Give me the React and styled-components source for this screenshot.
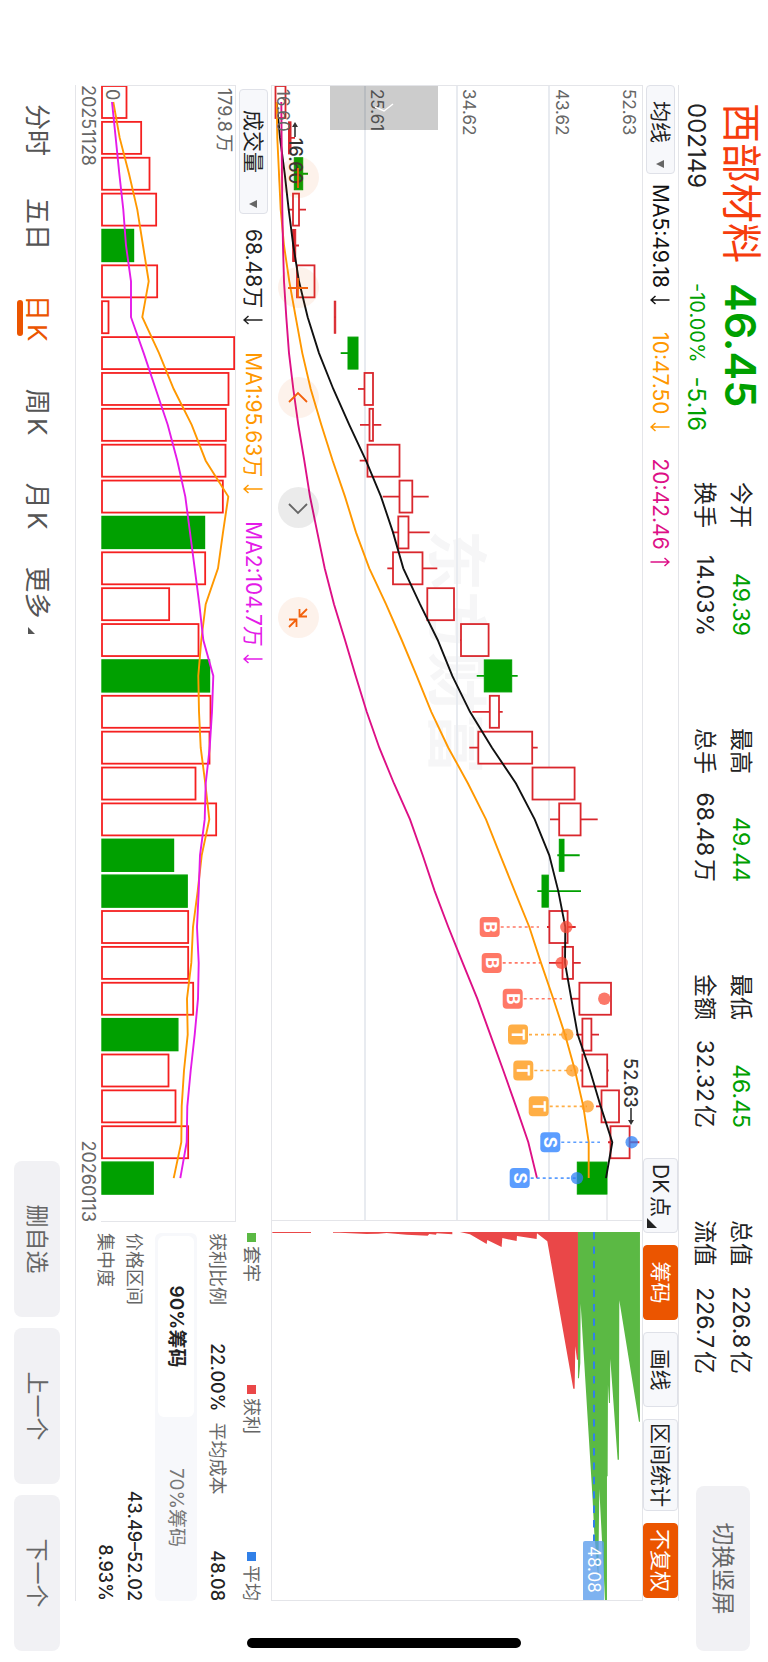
import React, { useState } from 'react';
import styled, { createGlobalStyle } from 'styled-components';

const UP = '#d9272d';
const VOL_UP = '#f52020';
const DOWN = '#00a000';
const ORANGE = '#ff9800';
const PINK = '#dd1086';
const MAGENTA = '#e41be8';

const STEP = 35.87;
const BAR = 32;

// [low, bodyBottom, bodyTop, high, type]
const candles = [
    [275, 275.5, 285.5, 286, 'up'],
    [288, 288.5, 291, 295, 'flat'],
    [294, 294.3, 302.7, 308, 'down'],
    [288, 293, 299, 306, 'up'],
    [293, 292.7, 295.7, 299, 'flat'],
    [297, 297, 314.5, 315, 'up'],
    [335, 334.3, 335.7, 335, 'flat'],
    [340.7, 348, 358, 358, 'down'],
    [358, 364.5, 373, 373, 'up'],
    [360, 369.5, 373, 381.3, 'up'],
    [359.7, 367.5, 399.5, 400, 'up'],
    [382.7, 399.5, 412.3, 428.7, 'up'],
    [392, 398.3, 408.5, 429.7, 'up'],
    [387.3, 393, 422.5, 437.3, 'up'],
    [427, 427.3, 454, 454, 'up'],
    [460, 461, 488.6, 489, 'up'],
    [476.7, 484.3, 511.7, 517.7, 'down'],
    [472.3, 489.8, 499, 502.7, 'up'],
    [469.3, 478.3, 532.2, 537.7, 'up'],
    [532, 532.5, 574.6, 575, 'up'],
    [550, 559.2, 580.6, 597.7, 'up'],
    [557.3, 559.3, 564, 579.7, 'down'],
    [537.3, 542, 548.3, 581, 'down'],
    [547, 549.4, 567.6, 575.7, 'up'],
    [549, 562.5, 573, 580.7, 'up'],
    [571.3, 579.4, 611, 611, 'up'],
    [576, 582.4, 591.4, 599, 'up'],
    [580.3, 582.4, 607.2, 608.7, 'up'],
    [596, 601.5, 619, 619, 'up'],
    [608, 610.5, 629.6, 639.3, 'up'],
    [577, 577.3, 607, 607, 'down'],
];

const ma5 = [276.7, 280, 284.7, 288.7, 293.3, 299, 307.7, 319, 333.3, 349.3, 366, 381, 393, 403.3, 420, 437.7, 452.3, 470, 492, 516, 534.7, 549.3, 558.3, 565.3, 565, 571.3, 577.7, 590, 600.7, 612.3, 606];
const ma10 = [276.7, 277.3, 279, 280.7, 284, 289.3, 295.7, 302.3, 310.7, 321.3, 332.7, 345, 356, 369.3, 386, 401.7, 416.7, 431.3, 448.3, 468, 486, 500.3, 514.7, 529.3, 541, 553.3, 565, 575, 583.3, 588.7, 588.7];
const ma20 = [281.3, 281.6, 282, 282.3, 283, 284, 286.3, 289, 293.3, 298.3, 304.3, 310, 317.3, 324.7, 334, 345, 355.7, 366.7, 379.3, 394, 410, 422.7, 434.7, 448.3, 462.7, 477.3, 490.3, 503.3, 516, 528.3, 537];

const volumes = [114, 158, 183, 203, 135, 206, 60, 437, 420, 412, 411, 403, 348, 350, 242, 330, 363, 366, 363, 321, 383, 255, 296, 299, 299, 314, 268, 240, 261, 299, 194];
const volumeDown = [4, 12, 16, 21, 22, 26, 30];
const volMa1 = [73, 92, 120, 145, 162, 179, 160, 210, 254, 308, 350, 418, 402, 387, 350, 337, 328, 330, 335, 349, 361, 338, 326, 312, 307, 294, 296, 285, 278, 277, 254];
const volMa2 = [69, 80, 91, 103, 111, 126, 126, 164, 200, 236, 265, 289, 303, 317, 331, 343, 373, 369, 362, 350, 347, 333, 329, 324, 329, 327, 317, 305, 295, 293, 274];

const trades = [
    { i: 23, type: 'B', label: 489.7, dot: 566.3, end: 539 },
    { i: 24, type: 'B', label: 491.7, dot: 561.7, end: 540 },
    { i: 25, type: 'B', label: 512.7, dot: 604.3, end: 562 },
    { i: 26, type: 'T', label: 518, dot: 567.3, end: 567 },
    { i: 27, type: 'T', label: 523.3, dot: 572.3, end: 572 },
    { i: 28, type: 'T', label: 538.7, dot: 587.7, end: 587 },
    { i: 29, type: 'S', label: 550.3, dot: 631.7, end: 600 },
    { i: 30, type: 'S', label: 519.7, dot: 577, end: 577 },
];
const tradeColor = { B: '#ff7866', T: '#ffae45', S: '#5b9dff' };
const dotColor = { B: '#fa4b37', T: '#ff9a1e', S: '#2f80f5' };

const stats = [
    [['今开', '49.39', true], ['换手', '14.03%']],
    [['最高', '49.44', true], ['总手', '68.48万']],
    [['最低', '46.45', true], ['金额', '32.32亿']],
    [['总值', '226.8亿'], ['流值', '226.7亿']],
];

const periods = ['分时', '五日', '日K', '周K', '月K', '更多'];

const cx = (i) => 16 + i * STEP;
const py = (v) => 642 - v;
const vy = (v) => 146 - v / 3;
const line = (values, fn) => values.map((v, i) => `${cx(i).toFixed(1)},${fn(v).toFixed(1)}`).join(' ');

const Arrow = ({ up }) => (
    <ArrowIcon width="10" height="20" viewBox="0 0 10 20">
        <path d={up ? 'M5 19.5V1M1 5.500L5 1l4 4.500' : 'M5 .5V19M1 14.500l4 4.500 4-4.500'} fill="none" stroke="currentColor" strokeWidth="1.500" />
    </ArrowIcon>
);

const PriceChart = () => (
    <Svg viewBox="0 0 1134 370">
        <text x="444" y="208" fontSize="61" fontWeight="700" fill="#f6f6f7">东方财富</text>
        <g stroke="#e8ebf0" strokeWidth="2">
            <path d="M0 93H1134M0 185H1134M0 277H1134" />
            <path d="M1109 35H1134" strokeWidth="1" stroke="#d9dbe0" />
        </g>
        {candles.map(([low, bottom, top, high, type], i) => {
            const color = type === 'down' ? DOWN : UP;
            const x = cx(i);
            return (
                <g key={i} stroke={color} strokeWidth="1.800">
                    <path d={`M${x} ${py(high)}V${py(top)}M${x} ${py(bottom)}V${py(low)}`} />
                    <rect
                        x={x - BAR / 2}
                        y={py(top)}
                        width={BAR}
                        height={top - bottom}
                        fill={type === 'up' ? '#fff' : color}
                        strokeWidth={type === 'up' ? 1.8 : 1}
                    />
                </g>
            );
        })}
        <g fill="none" strokeWidth="1.900">
            <polyline points={line(ma5, py)} stroke="#111" />
            <polyline points={line(ma10, py)} stroke={ORANGE} />
            <polyline points={line(ma20, py)} stroke={PINK} />
        </g>
        {trades.map(({ i, type, label, dot, end }) => (
            <g key={i}>
                <path d={`M${cx(i)} ${py(label + 11)}V${py(end)}`} stroke={tradeColor[type]} strokeWidth="1.700" strokeDasharray="3 3" />
                <circle cx={cx(i)} cy={py(dot)} r="6.200" fill={dotColor[type]} opacity="0.75" />
                <rect x={cx(i) - 10} y={py(label + 10)} width="20" height="20" rx="4" fill={tradeColor[type]} />
                <text x={cx(i)} y={py(label) + 6} fontSize="17" fontWeight="700" fill="#fff" textAnchor="middle">{type}</text>
            </g>
        ))}
        <g fontSize="17" fill="#666">
            <text x="3" y="19">52.63</text>
            <text x="3" y="86">43.62</text>
            <text x="3" y="179">34.62</text>
            <text x="3" y="271">25.61</text>
            <text x="3" y="365">16.60</text>
        </g>
        <g fontSize="18" fontWeight="500" fill="#333">
            <text x="52" y="353">16.60</text>
            <text x="972" y="18">52.63</text>
        </g>
        <g fill="#333" stroke="#333" strokeWidth="1.600">
            <path d="M38 347H51" />
            <path d="M41 344V350L36 347Z" strokeWidth="0" />
            <path d="M1022 11H1034" />
            <path d="M1034 8V14L1039 11Z" strokeWidth="0" />
        </g>
    </Svg>
);

const ChipChart = () => (
    <Svg viewBox="0 0 368 370">
        {/* rotated so the price axis runs along the first coordinate */}
        <g transform="matrix(0 -0.3333 0.3333 0 -32.3 382)">
            <path fill="#ea4748" d="M37 97V100H153V97ZM219 97V99H240L320 103L355 102L380 100L440 105L503 108L508 103L528 105L530 101L577 104V97ZM600 97L630 104L680 133L682 121L725 142L727 115L770 124L771 109L830 118L831 101L862 125L940 567H944L946 440L951 480H954V97Z" />
            <path fill="#5bb944" d="M954 97V536H957L961 490L962 312L998 900L1003 1000L1015 1135L1018 868L1032 1135L1035 1206H1041V830H1043L1044 555L1047 610H1050L1051 478L1073 780H1077L1078 302L1137 666H1140V97Z" />
        </g>
        <path d="M0 48H309" stroke="#3180e8" strokeWidth="2" strokeDasharray="7.400 7" />
        <rect x="309" y="38" width="60" height="21" rx="2" fill="#5a9cec" opacity="0.78" />
        <text x="314" y="54" fontSize="17" fill="#fff">48.08</text>
    </Svg>
);

const VolumeChart = () => (
    <Svg viewBox="0 0 1135 134">
        {volumes.map((v, i) => {
            const down = volumeDown.includes(i);
            return (
                <rect
                    key={i}
                    x={cx(i) - BAR / 2}
                    y={vy(v) + 0.5}
                    width={BAR}
                    height={132.5 - vy(v)}
                    fill={down ? DOWN : '#fff'}
                    stroke={down ? DOWN : VOL_UP}
                    strokeWidth={down ? 1.4 : 1.8}
                />
            );
        })}
        <g fill="none" strokeWidth="1.900">
            <polyline points={line(volMa1, vy)} stroke={ORANGE} />
            <polyline points={line(volMa2, vy)} stroke={MAGENTA} />
        </g>
        <g fontSize="18" fill="#666">
            <text x="2" y="17">179.8万</text>
            <text x="3" y="129">0</text>
        </g>
    </Svg>
);

const App = () => {
    const [period, setPeriod] = useState('日K');
    const [range, setRange] = useState('90%筹码');

    return (
        <Screen>
            <GlobalStyle />
            <Stage>
                <Header>
                    <Quote>
                        <Name>西部材料</Name>
                        <Price>46.45</Price>
                        <Code>002149</Code>
                        <Change>
                            <Percent>-10.00%</Percent>
                            <span>-5.16</span>
                        </Change>
                    </Quote>
                    <Stats>
                        {stats.map((column) => (
                            <StatColumn key={column[0][0]}>
                                {column.map(([label, value, down]) => (
                                    <StatRow key={label}>
                                        <span>{label}</span>
                                        <StatValue $down={down}>{value}</StatValue>
                                    </StatRow>
                                ))}
                            </StatColumn>
                        ))}
                    </Stats>
                    <GrayButton $tall>切换竖屏</GrayButton>
                </Header>

                <Toolbar>
                    <SelectBox $width={89} $pad={15}>
                        <select aria-label="主图指标" defaultValue="均线">
                            <option>均线</option>
                        </select>
                        <Caret />
                    </SelectBox>
                    <Indicators>
                        <Indicator $color="#111">MA5:49.18<Arrow /></Indicator>
                        <Indicator $color={ORANGE}>10:47.50<Arrow /></Indicator>
                        <Indicator $color={PINK}>20:42.46<Arrow up /></Indicator>
                    </Indicators>
                    <Tools>
                        <ToolButton $corner>DK点</ToolButton>
                        <ToolButton $active>筹码</ToolButton>
                        <ToolButton>画线</ToolButton>
                        <ToolButton $wide>区间统计</ToolButton>
                        <ToolButton $active>不复权</ToolButton>
                    </Tools>
                </Toolbar>

                <PricePanel>
                    <PriceArea>
                        <PriceChart />
                        <SideHandle aria-label="展开">
                            <svg width="10" height="20" viewBox="0 0 10 20">
                                <path d="M1 1l7 9-4 9" fill="none" stroke="#fff" strokeWidth="1.500" />
                            </svg>
                        </SideHandle>
                        <Floats>
                            <RoundButton aria-label="缩小">
                                <svg width="20" height="20" viewBox="0 0 20 20"><path d="M0 10H20" /></svg>
                            </RoundButton>
                            <RoundButton aria-label="放大">
                                <svg width="20" height="20" viewBox="0 0 20 20"><path d="M0 10H20M10 0V20" /></svg>
                            </RoundButton>
                            <RoundButton aria-label="左移">
                                <svg width="20" height="20" viewBox="0 0 20 20"><path d="M14 1L5 10L14 19" /></svg>
                            </RoundButton>
                            <RoundButton aria-label="右移" $gray>
                                <svg width="20" height="20" viewBox="0 0 20 20"><path d="M6 1L15 10L6 19" /></svg>
                            </RoundButton>
                            <RoundButton aria-label="收起">
                                <svg width="20" height="20" viewBox="0 0 20 20">
                                    <path d="M1 1L8 8M1 8.500H8.500V1M19 19L12 12M19 11.500H11.500V19" />
                                </svg>
                            </RoundButton>
                        </Floats>
                    </PriceArea>
                    <ChipChart />
                </PricePanel>

                <Lower>
                    <div>
                        <VolumeHead>
                            <SelectBox $width={125} $pad={20}>
                                <select aria-label="副图指标" defaultValue="成交量">
                                    <option>成交量</option>
                                </select>
                                <Caret />
                            </SelectBox>
                            <Indicators $tight>
                                <Indicator $color="#222">68.48万<Arrow /></Indicator>
                                <Indicator $color={ORANGE}>MA1:95.63万<Arrow /></Indicator>
                                <Indicator $color={MAGENTA}>MA2:104.7万<Arrow /></Indicator>
                            </Indicators>
                        </VolumeHead>
                        <VolumeArea>
                            <VolumeChart />
                        </VolumeArea>
                        <Dates>
                            <span>20251128</span>
                            <span>20260113</span>
                        </Dates>
                    </div>
                    <ChipInfo>
                        <Legend>
                            <LegendItem $color="#5bb944">套牢</LegendItem>
                            <LegendItem $color="#ea4748">获利</LegendItem>
                            <LegendItem $color="#3180e8">平均</LegendItem>
                        </Legend>
                        <InfoPair>
                            <InfoRow>获利比例<b>22.00%</b></InfoRow>
                            <InfoRow>平均成本<b>48.08</b></InfoRow>
                        </InfoPair>
                        <Segment>
                            {['90%筹码', '70%筹码'].map((item) => (
                                <SegmentButton key={item} $active={item === range} onClick={() => setRange(item)}>
                                    {item}
                                </SegmentButton>
                            ))}
                        </Segment>
                        <InfoRow>价格区间<b>43.49–52.02</b></InfoRow>
                        <InfoRow>集中度<b>8.93%</b></InfoRow>
                    </ChipInfo>
                </Lower>

                <Footer>
                    <Periods>
                        {periods.map((item) => (
                            <PeriodButton key={item} $active={item === period} onClick={() => setPeriod(item)}>
                                {item}
                                {item === '更多' && <MoreCorner />}
                            </PeriodButton>
                        ))}
                    </Periods>
                    <Actions>
                        <GrayButton>删自选</GrayButton>
                        <GrayButton>上一个</GrayButton>
                        <GrayButton>下一个</GrayButton>
                    </Actions>
                </Footer>
                <HomeBar />
            </Stage>
        </Screen>
    );
};

export default App;

const GlobalStyle = createGlobalStyle`
    * {
        box-sizing: border-box;
    }
    body {
        margin: 0;
        background: #fff;
        color: #222;
        font-family: Inter, "Noto Sans CJK SC", sans-serif;
        text-autospace: normal;
    }
    button, select {
        border: none;
        padding: 0;
        background: none;
        font-family: inherit;
        line-height: 28px;
        color: inherit;
        cursor: pointer;
        white-space: nowrap;
    }
`;

const Screen = styled.div`
    width: 100vw;
    height: 100vh;
    overflow: hidden;
`;

/* landscape layout shown on a portrait screen */
const Stage = styled.main`
    position: relative;
    display: flex;
    flex-direction: column;
    width: 100vh;
    height: 100vw;
    transform-origin: top left;
    transform: translateX(100vw) rotate(90deg);
`;

const Header = styled.header`
    display: flex;
    align-items: center;
    height: 89px;
    padding: 0 11px 0 103px;
`;

const Quote = styled.div`
    display: grid;
    grid-template-columns: 180px 199px;
    grid-template-rows: 54px 35px;
    align-items: center;
`;

const Name = styled.h1`
    margin: 0;
    font-size: 40px;
    line-height: 54px;
    font-weight: 400;
    color: #f63c0c;
`;

const Price = styled.div`
    font-size: 43px;
    line-height: 54px;
    font-weight: 600;
    color: ${DOWN};
`;

const Code = styled.div`
    font-size: 24px;
    line-height: 35px;
`;

const Change = styled.div`
    display: flex;
    align-items: center;
    gap: 14px;
    font-size: 24px;
    line-height: 35px;
    color: ${DOWN};
`;

const Percent = styled.span`
    font-size: 20px;
`;

const Stats = styled.div`
    display: flex;
    gap: 92px;
`;

const StatColumn = styled.div`
    width: 154px;
`;

const StatRow = styled.div`
    display: flex;
    justify-content: space-between;
    font-size: 23px;
    line-height: 36px;
    white-space: nowrap;
`;

const StatValue = styled.span`
    color: ${({ $down }) => ($down ? DOWN : 'inherit')};
`;

const GrayButton = styled.button`
    width: ${({ $tall }) => ($tall ? 165 : 156)}px;
    height: ${({ $tall }) => ($tall ? 54 : 46)}px;
    margin-left: ${({ $tall }) => ($tall ? 'auto' : '0')};
    border-radius: 8px;
    background: #f1f1f4;
    font-size: 23px;
    color: #666;
`;

const Toolbar = styled.div`
    display: flex;
    align-items: center;
    height: 36px;
    margin: 0 61px 0 85px;
    padding-right: 3px;
    border-top: 1px solid #e4e5e9;
`;

const SelectBox = styled.div`
    position: relative;
    flex: none;
    width: ${({ $width }) => $width}px;
    height: 29px;
    border: 1px solid #dfe1e8;
    border-radius: 4px;
    background: #f7f8fb;

    select {
        appearance: none;
        width: 100%;
        height: 100%;
        padding-left: ${({ $pad }) => $pad}px;
        font-size: 21px;
    }
`;

const Caret = styled.i`
    position: absolute;
    right: 5px;
    top: 10px;
    border: 4px solid transparent;
    border-top: 8px solid #666;
    border-bottom: 0;
    pointer-events: none;
`;

const Indicators = styled.div`
    display: flex;
    gap: 27px;
    margin-left: ${({ $tight }) => ($tight ? 15 : 10)}px;
    text-autospace: no-autospace;
`;

const Indicator = styled.span`
    display: flex;
    align-items: center;
    gap: 7px;
    font-size: 21px;
    line-height: 28px;
    white-space: nowrap;
    color: ${({ $color }) => $color};
`;

const ArrowIcon = styled.svg`
    display: block;
`;

const Tools = styled.div`
    display: flex;
    gap: 12px;
    margin-left: auto;
`;

const ToolButton = styled.button`
    position: relative;
    width: ${({ $wide }) => ($wide ? 92 : 75)}px;
    height: 35px;
    border: 1px solid ${({ $active }) => ($active ? '#eb5500' : '#dfe1e8')};
    border-radius: 4px;
    background: ${({ $active }) => ($active ? '#eb5500' : '#f7f8fb')};
    color: ${({ $active }) => ($active ? '#fff' : '#222')};
    font-size: 21px;
    padding-right: ${({ $corner }) => ($corner ? 10 : 0)}px;

    &::after {
        content: '';
        display: ${({ $corner }) => ($corner ? 'block' : 'none')};
        position: absolute;
        right: 4px;
        bottom: 3px;
        border-left: 10px solid transparent;
        border-bottom: 10px solid #222;
    }
`;

const PricePanel = styled.section`
    display: grid;
    grid-template-columns: 1fr 368px;
    gap: 11px;
    margin: 0 61px 0 85px;
    border: 1px solid #e4e5e9;
`;

const PriceArea = styled.div`
    position: relative;
    border-right: 1px solid #e4e5e9;
`;

const Svg = styled.svg`
    display: block;
    width: 100%;
`;

const SideHandle = styled.button`
    position: absolute;
    left: 0;
    top: 204px;
    display: flex;
    align-items: center;
    justify-content: center;
    width: 44px;
    height: 108px;
    background: rgba(0, 0, 0, 0.2);
`;

const Floats = styled.div`
    position: absolute;
    left: 71px;
    bottom: 6px;
    display: flex;
    gap: 69px;
`;

const RoundButton = styled.button`
    display: flex;
    align-items: center;
    justify-content: center;
    width: 41px;
    height: 41px;
    border-radius: 50%;
    background: ${({ $gray }) => ($gray ? 'rgba(0, 0, 0, 0.08)' : 'rgba(235, 85, 0, 0.08)')};

    path {
        fill: none;
        stroke: ${({ $gray }) => ($gray ? '#666' : '#f2610c')};
        stroke-width: 1.8;
    }
`;

const Lower = styled.section`
    display: grid;
    grid-template-columns: 1fr 368px;
    gap: 11px;
    margin: 0 61px 0 85px;
    border-bottom: 1px solid #e4e5e9;
`;

const VolumeHead = styled.div`
    display: flex;
    align-items: center;
    height: 35px;
    padding-left: 4px;
`;

const VolumeArea = styled.div`
    border: 1px solid #e4e5e9;
    border-bottom: none;
`;

const Dates = styled.div`
    display: flex;
    justify-content: space-between;
    font-size: 18px;
    line-height: 25px;
    color: #666;
`;

const ChipInfo = styled.div`
    font-size: 18px;
    color: #666;
`;

const Legend = styled.div`
    display: grid;
    grid-template-columns: 152px 1fr auto;
    line-height: 39px;
`;

const LegendItem = styled.span`
    display: flex;
    align-items: center;
    gap: 4px;

    &::before {
        content: '';
        width: 9px;
        height: 9px;
        background: ${({ $color }) => $color};
    }
`;

const InfoPair = styled.div`
    display: grid;
    grid-template-columns: 1fr 1fr;
    gap: 11px;
    padding-bottom: 6px;
`;

const InfoRow = styled.div`
    display: flex;
    justify-content: space-between;
    line-height: 29px;

    b {
        font-weight: 500;
        color: #222;
    }
`;

const Segment = styled.div`
    display: grid;
    grid-template-columns: 1fr 1fr;
    height: 42px;
    margin-bottom: 6px;
    padding: 3px;
    border-radius: 6px;
    background: #f7f8fb;
`;

const SegmentButton = styled.button`
    border-radius: 6px;
    background: ${({ $active }) => ($active ? '#fff' : 'transparent')};
    color: ${({ $active }) => ($active ? '#222' : '#777')};
    font-size: 19px;
    font-weight: ${({ $active }) => ($active ? 600 : 400)};
`;

const Footer = styled.footer`
    display: flex;
    flex: 1;
    align-items: center;
    justify-content: space-between;
    padding: 0 11px 0 83px;
`;

const Periods = styled.nav`
    display: flex;
`;

const PeriodButton = styled.button`
    position: relative;
    width: 94px;
    height: 40px;
    font-size: 26px;
    color: ${({ $active }) => ($active ? '#eb5500' : '#555')};

    &::after {
        content: '';
        display: ${({ $active }) => ($active ? 'block' : 'none')};
        position: absolute;
        left: 29px;
        bottom: 0;
        width: 36px;
        height: 6px;
        border-radius: 3px;
        background: #eb5500;
    }
`;

const MoreCorner = styled.i`
    display: inline-block;
    margin-left: 8px;
    border-left: 7px solid transparent;
    border-bottom: 7px solid #555;
`;

const Actions = styled.div`
    display: flex;
    gap: 11px;
`;

const HomeBar = styled.div`
    position: absolute;
    right: 14px;
    top: 50%;
    width: 10px;
    height: 274px;
    margin-top: -137px;
    border-radius: 5px;
    background: #000;
`;
